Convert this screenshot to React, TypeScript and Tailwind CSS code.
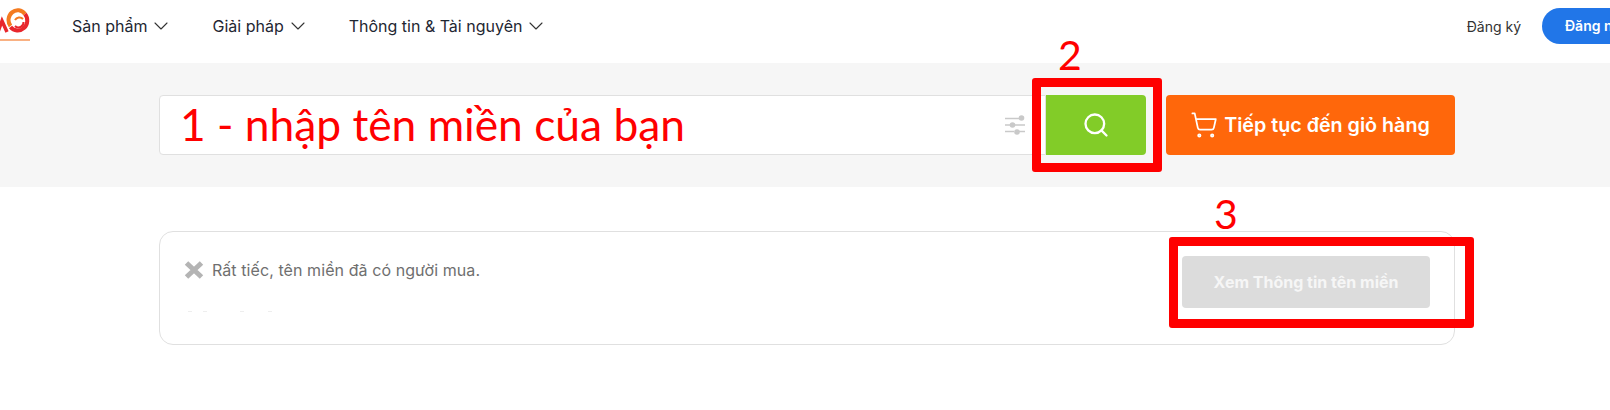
import { ChevronDown, Search, ShoppingCart } from "lucide-react";

const navItems = ["Sản phẩm", "Giải pháp", "Thông tin & Tài nguyên"];
const fadedDots = ["w-[4px]", "w-[4px] ml-[11px]", "w-[4px] ml-[33px]", "w-[4px] ml-[24px]"];

function Logo() {
  return (
    <div className="w-[30px] h-[33px] mt-2 self-start overflow-hidden border-b-2 border-[#f9b183]">
      <svg width="30" height="31" viewBox="0 0 30 31">
        <path d="M-2 24 L2 13 L7 24" fill="none" stroke="#e8262c" strokeWidth="3.5" />
        <path d="M10.5 18 A9 9.5 0 0 1 25 6" fill="none" stroke="#f47b20" strokeWidth="4" />
        <path d="M25 6 A9.5 10 0 0 1 10.5 19" fill="none" stroke="#e8262c" strokeWidth="4" />
        <path d="M15 12 A5 5 0 0 1 23 11" fill="none" stroke="#f47b20" strokeWidth="2" />
        <path d="M23.5 14 A5 5 0 0 1 15 18" fill="none" stroke="#e8262c" strokeWidth="2" />
      </svg>
    </div>
  );
}

function FilterIcon() {
  return (
    <svg width="22" height="20" viewBox="0 0 22 20" fill="none" stroke="#c9c9c9" strokeWidth="1.5">
      <path d="M1 3.5h14M1 10h5M11 10h10M1 16.5h9M15 16.5h6" />
      <circle cx="17.5" cy="3" r="2.8" fill="#c9c9c9" stroke="none" />
      <circle cx="8.5" cy="10" r="2.8" fill="#c9c9c9" stroke="none" />
      <circle cx="13" cy="17" r="2.8" fill="#c9c9c9" stroke="none" />
    </svg>
  );
}

export default function App() {
  return (
    <div className="relative w-[1610px] h-[410px] overflow-hidden bg-white font-['Inter',sans-serif]">
      <header className="h-[63px] pb-[11px] flex items-center">
        <Logo />
        <nav className="flex items-center ml-[42px] gap-[39px] text-[16px] text-[#1f2733]">
          {navItems.map((item) => (
            <div key={item} className="flex items-center gap-[2px]">
              <span>{item}</span>
              <ChevronDown size={24} strokeWidth={1.1} className="text-[#333]" />
            </div>
          ))}
        </nav>
        <div className="ml-auto flex items-center">
          <span className="text-[14px] text-[#333] mr-[21px]">Đăng ký</span>
          <div className="w-[68px] h-9 overflow-hidden rounded-l-full bg-[#2176e8] pl-[23px] text-[14px] leading-9 font-semibold whitespace-nowrap text-white">
            Đăng nhập
          </div>
        </div>
      </header>

      <section className="h-[124px] bg-[#f6f6f6] pl-[159px] pt-8">
        <div className="flex w-[1296px] h-[60px]">
          <div className="flex-1 flex items-center justify-end pr-[19px] bg-white border border-[#e0e0e0] rounded-l">
            <FilterIcon />
          </div>
          <button className="w-[100px] flex items-center justify-center bg-[#82cc28] rounded-r text-white">
            <Search size={28} strokeWidth={2} />
          </button>
          <button className="w-[289px] ml-5 pr-[1px] flex items-center justify-center gap-[6px] bg-[#ff670b] rounded text-white text-[19.7px] font-semibold">
            <ShoppingCart size={28} strokeWidth={1.5} />
            <span className="pt-[2px]">Tiếp tục đến giỏ hàng</span>
          </button>
        </div>
      </section>

      <section className="pl-[159px] pt-11">
        <div className="flex w-[1296px] h-[114px] border border-[#e0e0e0] rounded-[14px]">
          <div className="flex-1 pl-6 pt-[26px]">
            <div className="flex items-center gap-[8px] text-[16px] text-[#6f6f6f] tracking-[0.08px]">
              <svg width="20" height="20" viewBox="0 0 20 20" className="shrink-0">
                <path d="M2.5 3 L17.5 17 M17.5 3 L2.5 17" stroke="#b4b4b4" strokeWidth="5" />
              </svg>
              Rất tiếc, tên miền đã có người mua.
            </div>
            <div className="flex mt-[29px] ml-[4px] h-px">
              {fadedDots.map((cls) => (
                <span key={cls} className={`${cls} h-px bg-[#eeeeee]`} />
              ))}
            </div>
          </div>
          <button className="w-[248px] h-[52px] mt-6 mr-6 rounded bg-[#dcdcdc] text-[16px] font-bold text-[#f6f6f6]">
            Xem Thông tin tên miền
          </button>
        </div>
      </section>

      {/* red annotations drawn on top of the page */}
      <div className="absolute left-[180px] top-[94px] text-[44.3px] leading-[60px] text-[#ff0000] whitespace-nowrap font-['Lato',sans-serif]">
        1 - nhập tên miền của bạn
      </div>
      <div className="absolute left-[1058px] top-[30px] text-[41px] leading-[50px] text-[#ff0000] font-['Lato',sans-serif]">2</div>
      <div className="absolute left-[1214px] top-[189px] text-[41px] leading-[50px] text-[#ff0000] font-['Lato',sans-serif]">3</div>
      <div className="absolute left-[1032px] top-[78px] w-[130px] h-[94px] border-[9px] border-[#ff0000] rounded-[3px]" />
      <div className="absolute left-[1169px] top-[237px] w-[305px] h-[91px] border-[9px] border-[#ff0000] rounded-[3px]" />
    </div>
  );
}
